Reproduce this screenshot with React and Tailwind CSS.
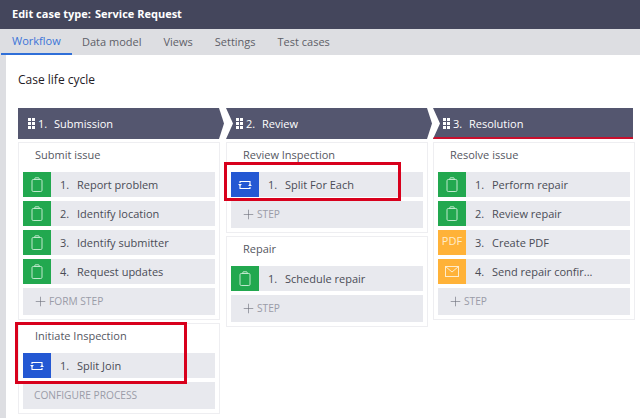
import { Plus } from 'lucide-react'

const ClipboardIcon = () => (
  <svg width="12" height="15" viewBox="0 0 12 15" fill="none" stroke="#bfe8cd" strokeWidth="1">
    <rect x="1" y="2.5" width="10" height="12" rx="1.2" />
    <path d="M3.5 2.5 L4.2 0.8 H7.8 L8.5 2.5" />
  </svg>
)

const SplitIcon = () => (
  <svg width="14" height="10" viewBox="0 0 14 10" fill="none" stroke="#ffffff" strokeWidth="1.1">
    <path d="M2 3 V1.5 H12 V5" />
    <path d="M12 7 V8.5 H2 V5" />
    <path d="M0 4 L2 6 L4 4 Z" fill="#ffffff" stroke="none" />
    <path d="M10 6 L12 4 L14 6 Z" fill="#ffffff" stroke="none" />
  </svg>
)

const MailIcon = () => (
  <svg width="14" height="11" viewBox="0 0 14 11" fill="none" stroke="#ffeccb" strokeWidth="1">
    <rect x="0.5" y="0.5" width="13" height="10" />
    <path d="M0.5 0.5 L7 6 L13.5 0.5" />
  </svg>
)

const Grip = () => (
  <div className="grid grid-cols-2 gap-x-px gap-y-px w-[7px] shrink-0">
    {[0, 1, 2, 3, 4, 5].map((i) => (
      <span key={i} className="w-[3px] h-[3px] bg-white" />
    ))}
  </div>
)

function Step({ n, label, kind }) {
  const tile = {
    form: 'bg-[#22a84f]',
    split: 'bg-[#2458d3]',
    pdf: 'bg-[#ffb238]',
    mail: 'bg-[#ffb238]',
  }
  return (
    <div className="flex items-center h-[25px] bg-[#e8e9ee] text-[11px] text-[#4a4c56]">
      <div className={`w-[28px] h-full flex items-center justify-center shrink-0 ${tile[kind]}`}>
        {kind === 'form' && <ClipboardIcon />}
        {kind === 'split' && <SplitIcon />}
        {kind === 'pdf' && <span className="text-[11px] text-[#ffeccb] -mt-[2px]">PDF</span>}
        {kind === 'mail' && <MailIcon />}
      </div>
      <span className="w-[17px] ml-[9px] pt-[2px]">{n}.</span>
      <span className="whitespace-nowrap pt-[2px]">{label}</span>
    </div>
  )
}

function AddStep({ label, plain }) {
  return (
    <div className="flex items-center h-[27px] bg-[#e8e9ee] text-[10.2px] text-[#9a9ca8] pl-[11px]">
      {!plain && <Plus size={15} strokeWidth={1} className="text-[#6f717c] -ml-[1px] mr-[1px] shrink-0" />}
      <span>{label}</span>
    </div>
  )
}

function Process({ title, steps, add, plain }) {
  return (
    <div className="border border-[#eeeef1] px-[4px] pb-[4px] bg-white">
      <div className="h-[29px] flex items-center pl-[12px] pb-[4px] text-[11px] text-[#55575f]">{title}</div>
      <div className="flex flex-col gap-[4px]">
        {steps.map((s, i) => (
          <Step key={s.label} n={i + 1} label={s.label} kind={s.kind} />
        ))}
        <AddStep label={add} plain={plain} />
      </div>
    </div>
  )
}

function Stage({ n, name, width, first, last, processes }) {
  return (
    <div className="shrink-0" style={{ width }}>
      <div
        className={`relative h-[31px] mb-[3px] bg-[#54566f] flex items-center text-[11px] text-white ${
          first
            ? 'pl-[10px] w-[206px] [clip-path:polygon(0_0,201px_0,206px_50%,201px_100%,0_100%)]'
            : last
            ? 'pl-[10px] w-[200px] [clip-path:polygon(0_0,100%_0,100%_100%,0_100%,7px_50%)]'
            : 'pl-[10px] w-[206px] [clip-path:polygon(0_0,201px_0,206px_50%,201px_100%,0_100%,7px_50%)]'
        }`}
      >
        <Grip />
        <span className="ml-[3px] w-[16px] pt-[2px]">{n}.</span>
        <span className="pt-[2px]">{name}</span>
        {last && <div className="absolute left-0 right-0 bottom-0 h-[2px] bg-[#c8102e]" />}
      </div>
      <div className="w-[202px] flex flex-col gap-[3px]">
        {processes.map((p) => (
          <Process key={p.title} {...p} />
        ))}
      </div>
    </div>
  )
}

const form = (label) => ({ label, kind: 'form' })

export default function App() {
  return (
    <div className="relative w-[640px] h-[418px] overflow-hidden bg-white font-['Open_Sans',sans-serif]">
      <div className="h-[29px] bg-[#44465c] flex items-center pl-[12px] text-[11px] font-bold text-white whitespace-nowrap">
        <span className="w-[83px]">Edit case type:</span>
        <span>Service Request</span>
      </div>
      <div className="h-[26px] bg-[#dddee2] flex text-[11px] text-[#5d5f68]">
        <div className="w-[71px] ml-[1px] pl-[11px] flex items-center border-b-2 border-[#2f6fd8] text-[#3b74d8]">Workflow</div>
        <div className="ml-[10px] flex items-center">Data model</div>
        <div className="ml-[22px] flex items-center">Views</div>
        <div className="ml-[22px] flex items-center">Settings</div>
        <div className="ml-[22px] flex items-center">Test cases</div>
      </div>
      <div className="flex h-[363px]">
        <div className="w-[6px] bg-[#dddee2] shrink-0" />
        <div className="pl-[12px]">
          <div className="h-[53px] pt-[15px] text-[12px] leading-[20px] text-[#1f2026]">Case life cycle</div>
          <div className="flex">
            <Stage
              n={1}
              name="Submission"
              width={208}
              first
              processes={[
                {
                  title: 'Submit issue',
                  add: 'FORM STEP',
                  steps: [form('Report problem'), form('Identify location'), form('Identify submitter'), form('Request updates')],
                },
                {
                  title: 'Initiate Inspection',
                  add: 'CONFIGURE PROCESS',
                  plain: true,
                  steps: [{ label: 'Split Join', kind: 'split' }],
                },
              ]}
            />
            <Stage
              n={2}
              name="Review"
              width={207}
              processes={[
                { title: 'Review Inspection', add: 'STEP', steps: [{ label: 'Split For Each', kind: 'split' }] },
                { title: 'Repair', add: 'STEP', steps: [form('Schedule repair')] },
              ]}
            />
            <Stage
              n={3}
              name="Resolution"
              width={203}
              last
              processes={[
                {
                  title: 'Resolve issue',
                  add: 'STEP',
                  steps: [
                    form('Perform repair'),
                    form('Review repair'),
                    { label: 'Create PDF', kind: 'pdf' },
                    { label: 'Send repair confir...', kind: 'mail' },
                  ],
                },
              ]}
            />
          </div>
        </div>
      </div>
      {/* red annotation boxes */}
      <div className="absolute left-[224px] top-[162px] w-[177px] h-[39px] border-[3px] border-[#d8001c]" />
      <div className="absolute left-[15px] top-[322px] w-[172px] h-[62px] border-[3px] border-[#d8001c]" />
    </div>
  )
}
